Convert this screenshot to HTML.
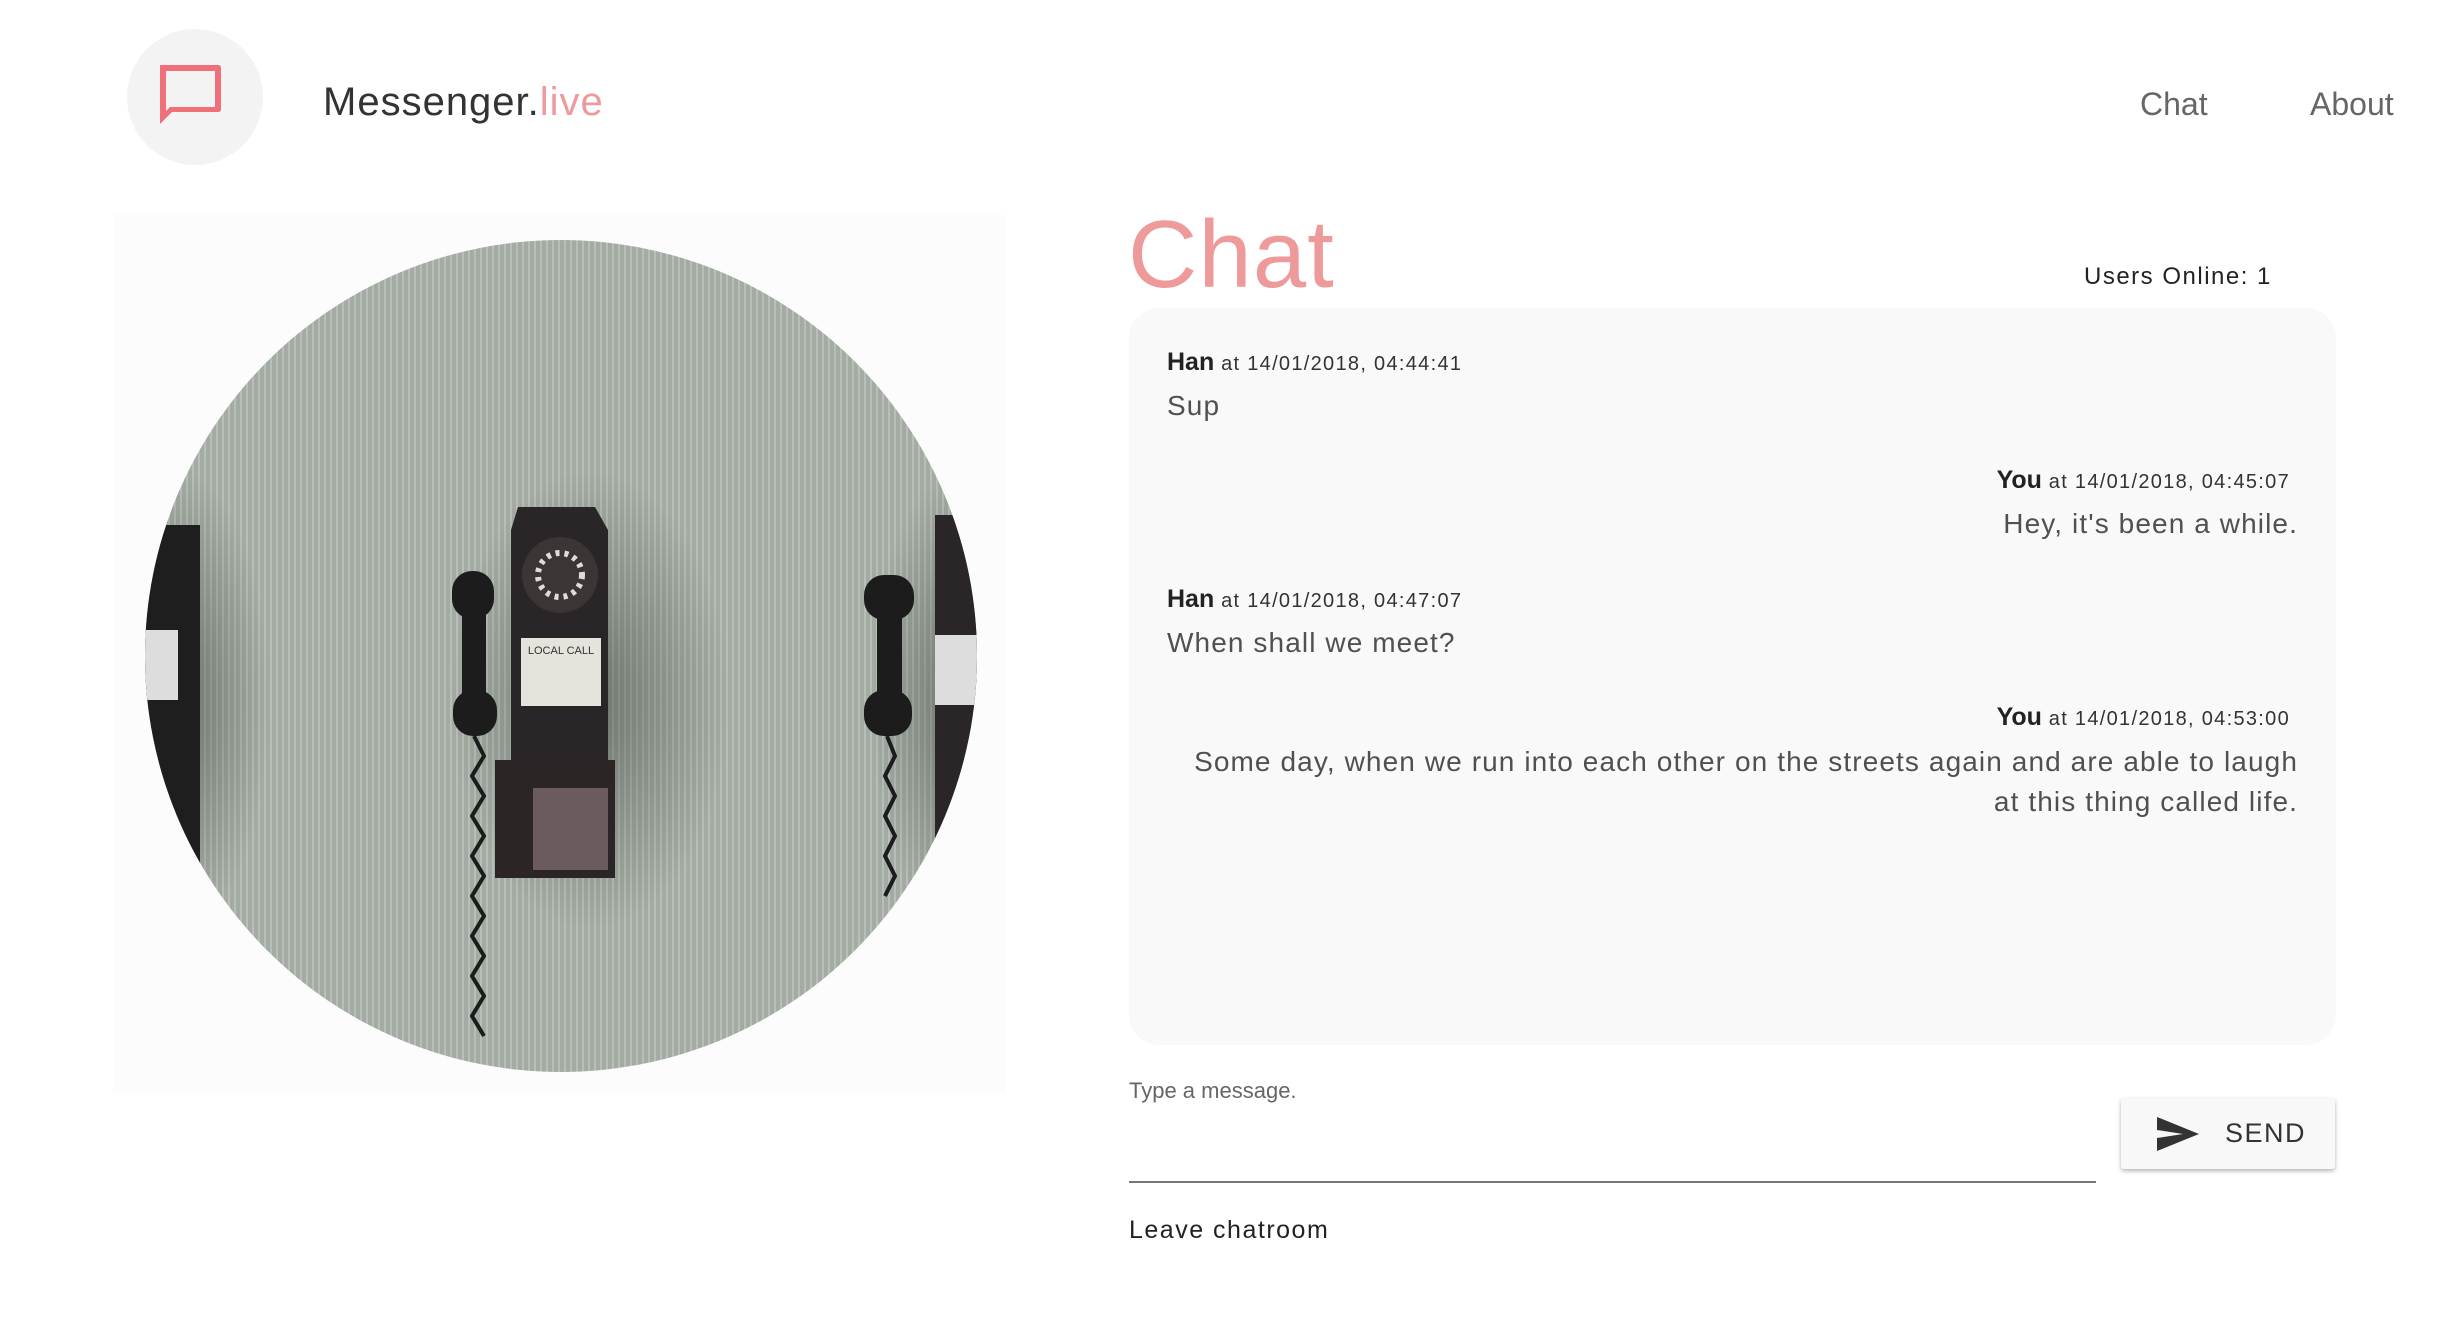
<!DOCTYPE html>
<html><head><meta charset="utf-8"><style>
*{margin:0;padding:0;box-sizing:border-box}
body{width:2452px;height:1320px;background:#fff;font-family:"Liberation Sans",sans-serif;position:relative;overflow:hidden;color:#333}
.abs{position:absolute;white-space:nowrap}
.logo{left:127px;top:29px;width:136px;height:136px;border-radius:50%;background:#f3f3f3}
.brand{left:323px;top:80px;font-size:40px;color:#333;letter-spacing:1px}
.brand span{color:#ee9a9d}
.nav{top:86px;font-size:32px;color:#666;font-weight:300}
.imgbox{left:113px;top:215px;width:893px;height:878px;background:#fcfcfc}
.h1{left:1128px;top:200px;font-size:96px;color:#ee9a9a;font-weight:300;letter-spacing:1px}
.online{left:2084px;top:263px;font-size:24px;color:#222;letter-spacing:1.5px}
.box{left:1129px;top:308px;width:1207px;height:737px;background:#f9f9f9;border-radius:30px}
.meta{font-size:20px;color:#333;letter-spacing:1.3px}
.meta b{font-size:25px;color:#222;letter-spacing:0}
.msg{font-size:28px;color:#505050;letter-spacing:1.1px}
.r{text-align:right}
</style></head><body>
<div class="abs logo"><svg width="136" height="136" viewBox="0 0 136 136"><path d="M33 36 H91 Q94 36 94 39 V80 Q94 83 91 83 H45 L33 95 Z M39 42 V82 L43 78 H88 V42 Z" fill="#ef7079"/></svg></div>
<div class="abs brand">Messenger.<span>live</span></div>
<div class="abs nav" style="left:2140px">Chat</div>
<div class="abs nav" style="left:2310px">About</div>

<div class="abs imgbox"><svg width="893" height="878" viewBox="113 215 893 878">
<defs><clipPath id="c"><circle cx="561" cy="656" r="416"/></clipPath>
<pattern id="st" width="6" height="10" patternUnits="userSpaceOnUse"><rect width="6" height="10" fill="#a3aba3"/><rect width="2" height="10" fill="#b8bfb8"/></pattern>
<radialGradient id="sh" cx="0.5" cy="0.5" r="0.5"><stop offset="0" stop-color="#3a3f38" stop-opacity=".5"/><stop offset="1" stop-color="#3a3f38" stop-opacity="0"/></radialGradient></defs>
<g clip-path="url(#c)">
<rect x="140" y="235" width="845" height="845" fill="url(#st)"/>
<ellipse cx="590" cy="700" rx="140" ry="230" fill="url(#sh)"/>
<ellipse cx="180" cy="700" rx="90" ry="230" fill="url(#sh)"/>
<ellipse cx="960" cy="700" rx="90" ry="230" fill="url(#sh)"/>
<rect x="140" y="525" width="60" height="350" fill="#1e1e1e"/>
<rect x="140" y="630" width="38" height="70" fill="#ddd"/>
<path d="M518 507 H595 L608 530 V760 H511 V530 Z" fill="#2a2526"/>
<circle cx="560" cy="575" r="38" fill="#3b3536"/>
<circle cx="560" cy="575" r="22" fill="none" stroke="#ddd" stroke-width="6" stroke-dasharray="4 5"/>
<rect x="521" y="638" width="80" height="68" fill="#e6e2dc"/>
<text x="561" y="654" font-size="11" text-anchor="middle" fill="#333" font-family="Liberation Sans">LOCAL CALL</text>
<rect x="495" y="760" width="120" height="118" fill="#2b2526"/>
<rect x="533" y="788" width="75" height="82" fill="#6b5a5e"/>
<rect x="452" y="571" width="42" height="48" rx="20" fill="#1c1c1c"/>
<rect x="462" y="600" width="24" height="110" fill="#1c1c1c"/>
<rect x="453" y="690" width="44" height="46" rx="20" fill="#1c1c1c"/>
<path d="M474 736 l10 20 l-12 20 l12 20 l-12 20 l12 20 l-12 20 l12 20 l-12 20 l12 20 l-12 20 l12 20 l-12 20 l12 20 l-12 20 l12 20" fill="none" stroke="#1c1c1c" stroke-width="4"/>
<rect x="935" y="515" width="50" height="360" fill="#2a2526"/>
<rect x="935" y="635" width="45" height="70" fill="#ddd"/>
<rect x="864" y="575" width="50" height="45" rx="20" fill="#1c1c1c"/>
<rect x="877" y="600" width="25" height="110" fill="#1c1c1c"/>
<rect x="864" y="690" width="48" height="46" rx="20" fill="#1c1c1c"/>
<path d="M887 736 l8 20 l-10 20 l10 20 l-10 20 l10 20 l-10 20 l10 20 l-10 20" fill="none" stroke="#1c1c1c" stroke-width="4"/>
</g></svg></div>

<div class="abs h1">Chat</div>
<div class="abs online">Users Online: 1</div>
<div class="abs box"></div>
<div class="abs meta" style="left:1167px;top:348px"><b>Han</b> at 14/01/2018, 04:44:41</div>
<div class="abs msg" style="left:1167px;top:390px">Sup</div>
<div class="abs meta r" style="right:162px;top:466px"><b>You</b> at 14/01/2018, 04:45:07</div>
<div class="abs msg r" style="right:154px;top:508px">Hey, it's been a while.</div>
<div class="abs meta" style="left:1167px;top:585px"><b>Han</b> at 14/01/2018, 04:47:07</div>
<div class="abs msg" style="left:1167px;top:627px">When shall we meet?</div>
<div class="abs meta r" style="right:162px;top:703px"><b>You</b> at 14/01/2018, 04:53:00</div>
<div class="abs msg r" style="right:154px;top:742px;line-height:40px">Some day, when we run into each other on the streets again and are able to laugh<br>at this thing called life.</div>

<div class="abs" style="left:1129px;top:1078px;font-size:22px;color:#666">Type a message.</div>
<div class="abs" style="left:1129px;top:1181px;width:967px;height:2px;background:#777"></div>
<div class="abs" style="left:2121px;top:1098px;width:214px;height:71px;background:#f8f8f8;box-shadow:0 2px 4px rgba(0,0,0,.3);border-radius:3px">
<svg style="position:absolute;left:34px;top:18px" width="46" height="36" viewBox="0 0 46 36"><path d="M2 1 L44 18 L2 35 L2 22 L28 18 L2 14 Z" fill="#333"/></svg>
<div style="position:absolute;left:104px;top:20px;font-size:27px;color:#333;letter-spacing:1.5px">SEND</div></div>
<div class="abs" style="left:1129px;top:1216px;font-size:25px;color:#222;letter-spacing:1.5px">Leave chatroom</div>
</body></html>
